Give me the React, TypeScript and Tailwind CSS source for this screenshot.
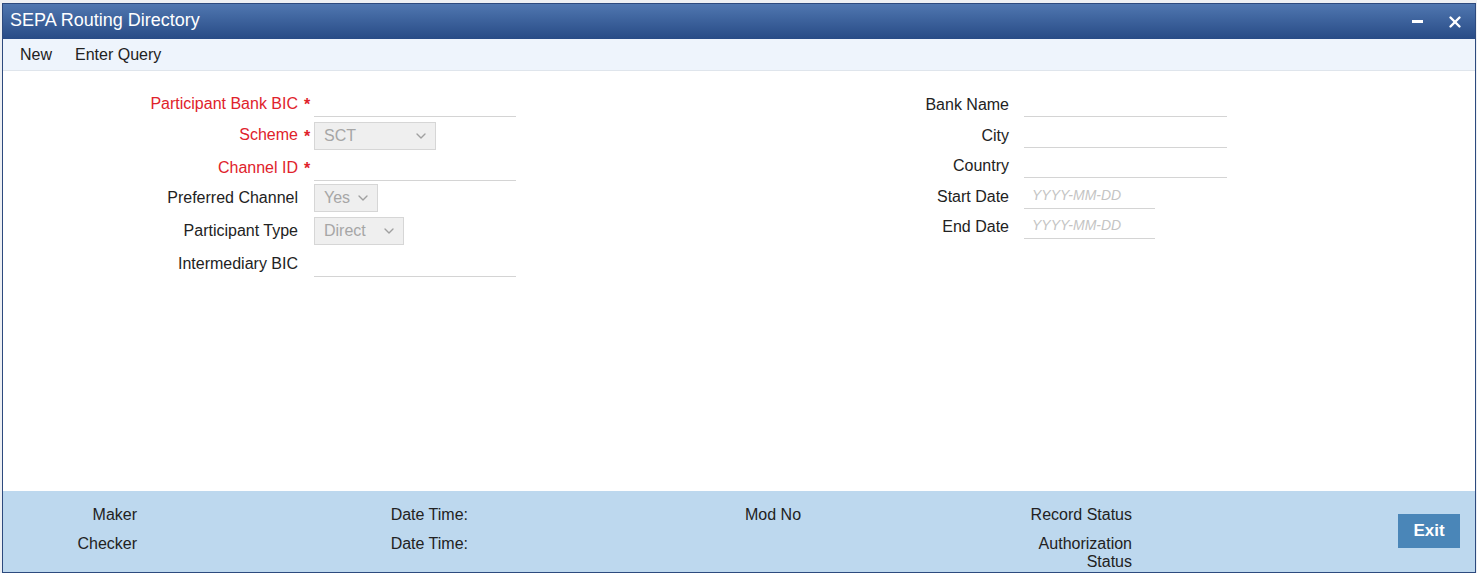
import { ChevronDown, X } from "lucide-react"

const font = { fontFamily: '"Liberation Sans", Arial, sans-serif' }

function Select({ value, width }: { value: string; width: string }) {
  return (
    <div
      className={`flex h-[28px] items-center justify-between border border-[#d6d6d6] bg-[#efefef] pl-[9px] pr-[6px] text-[16px] text-[#a6a6a6] ${width}`}
    >
      <span>{value}</span>
      <ChevronDown size={16} strokeWidth={2} className="text-[#a0a0a0]" />
    </div>
  )
}

function TextLine({ width, placeholder }: { width: string; placeholder?: string }) {
  return (
    <div
      className={`flex h-[27px] items-center border-b border-[#d4d4d4] pl-[8px] text-[14px] italic text-[#c4c4c4] ${width}`}
    >
      {placeholder}
    </div>
  )
}

function LeftRow({
  label,
  required,
  height,
  control,
  children,
}: {
  label: string
  required?: boolean
  height: string
  control: string
  children: React.ReactNode
}) {
  return (
    <div className={`flex items-start ${height}`}>
      <div
        className={`flex w-[295px] items-center justify-end text-[16px] ${control} ${required ? "text-[#e0222b]" : "text-[#222]"}`}
      >
        {label}
      </div>
      <div className={`flex w-[16px] items-start pl-[6px] pt-[3px] text-[16px] font-bold text-[#e0222b] ${control}`}>
        {required ? "*" : ""}
      </div>
      {children}
    </div>
  )
}

function RightRow({ label, height, children }: { label: string; height: string; children: React.ReactNode }) {
  return (
    <div className={`flex items-start ${height}`}>
      <div className="flex h-[29px] w-[193px] items-center justify-end text-[16px] text-[#222]">{label}</div>
      <div className="ml-[15px]">{children}</div>
    </div>
  )
}

export default function App() {
  return (
    <div className="h-[573px] w-full bg-[#eef0f3] pl-[2px] pr-[1px] pt-[3px]" style={font}>
      <div className="flex h-[570px] flex-col border border-[#2d4a7e] bg-white">
        {/* Title bar */}
        <div className="flex h-[35px] items-center justify-between bg-gradient-to-b from-[#5077b0] to-[#284b86] pb-[2px] pl-[7px] pr-[11px]">
          <h1 className="text-[18px] text-white">SEPA Routing Directory</h1>
          <div className="flex items-center gap-[23px] pt-[2px]">
            <div className="h-[3px] w-[11px] bg-white" />
            <X size={18} strokeWidth={3.2} className="text-white" />
          </div>
        </div>

        {/* Toolbar */}
        <div className="flex h-[32px] items-center gap-[23px] border-b border-[#dfe5ec] bg-[#eef4fc] pl-[17px] text-[16px] text-[#222]">
          <span>New</span>
          <span>Enter Query</span>
        </div>

        {/* Form */}
        <div className="flex flex-1 pt-[19px]">
          <div className="flex flex-col">
            <LeftRow label="Participant Bank BIC" required height="h-[32px]" control="h-[28px]">
              <TextLine width="w-[202px]" />
            </LeftRow>
            <LeftRow label="Scheme" required height="h-[32px]" control="h-[25px]">
              <Select value="SCT" width="w-[122px]" />
            </LeftRow>
            <LeftRow label="Channel ID" required height="h-[30px]" control="h-[27px]">
              <TextLine width="w-[202px]" />
            </LeftRow>
            <LeftRow label="Preferred Channel" height="h-[33px]" control="h-[28px]">
              <Select value="Yes" width="w-[64px]" />
            </LeftRow>
            <LeftRow label="Participant Type" height="h-[33px]" control="h-[28px]">
              <Select value="Direct" width="w-[90px]" />
            </LeftRow>
            <LeftRow label="Intermediary BIC" height="h-[28px]" control="h-[27px]">
              <TextLine width="w-[202px]" />
            </LeftRow>
          </div>

          <div className="ml-[300px] flex flex-col">
            <RightRow label="Bank Name" height="h-[31px]">
              <TextLine width="w-[203px]" />
            </RightRow>
            <RightRow label="City" height="h-[30px]">
              <TextLine width="w-[203px]" />
            </RightRow>
            <RightRow label="Country" height="h-[31px]">
              <TextLine width="w-[203px]" />
            </RightRow>
            <RightRow label="Start Date" height="h-[30px]">
              <TextLine width="w-[131px]" placeholder="YYYY-MM-DD" />
            </RightRow>
            <RightRow label="End Date" height="h-[31px]">
              <TextLine width="w-[131px]" placeholder="YYYY-MM-DD" />
            </RightRow>
          </div>
        </div>

        {/* Footer */}
        <div className="flex h-[81px] bg-[#bdd8ee] pt-[15px] text-[16px] leading-[18px] text-[#222]">
          <div className="flex w-[134px] flex-col gap-[11px] text-right">
            <span>Maker</span>
            <span>Checker</span>
          </div>
          <div className="flex w-[331px] flex-col gap-[11px] text-right">
            <span>Date Time:</span>
            <span>Date Time:</span>
          </div>
          <div className="ml-[277px] w-[60px]">
            <span>Mod No</span>
          </div>
          <div className="ml-[225px] flex w-[102px] flex-col gap-[11px] text-right">
            <span>Record Status</span>
            <span>Authorization Status</span>
          </div>
          <div className="ml-auto mr-[15px] pt-[8px]">
            <button className="h-[34px] w-[62px] bg-[#4a86b8] text-[17px] font-bold text-white">
              Exit
            </button>
          </div>
        </div>
      </div>
    </div>
  )
}
